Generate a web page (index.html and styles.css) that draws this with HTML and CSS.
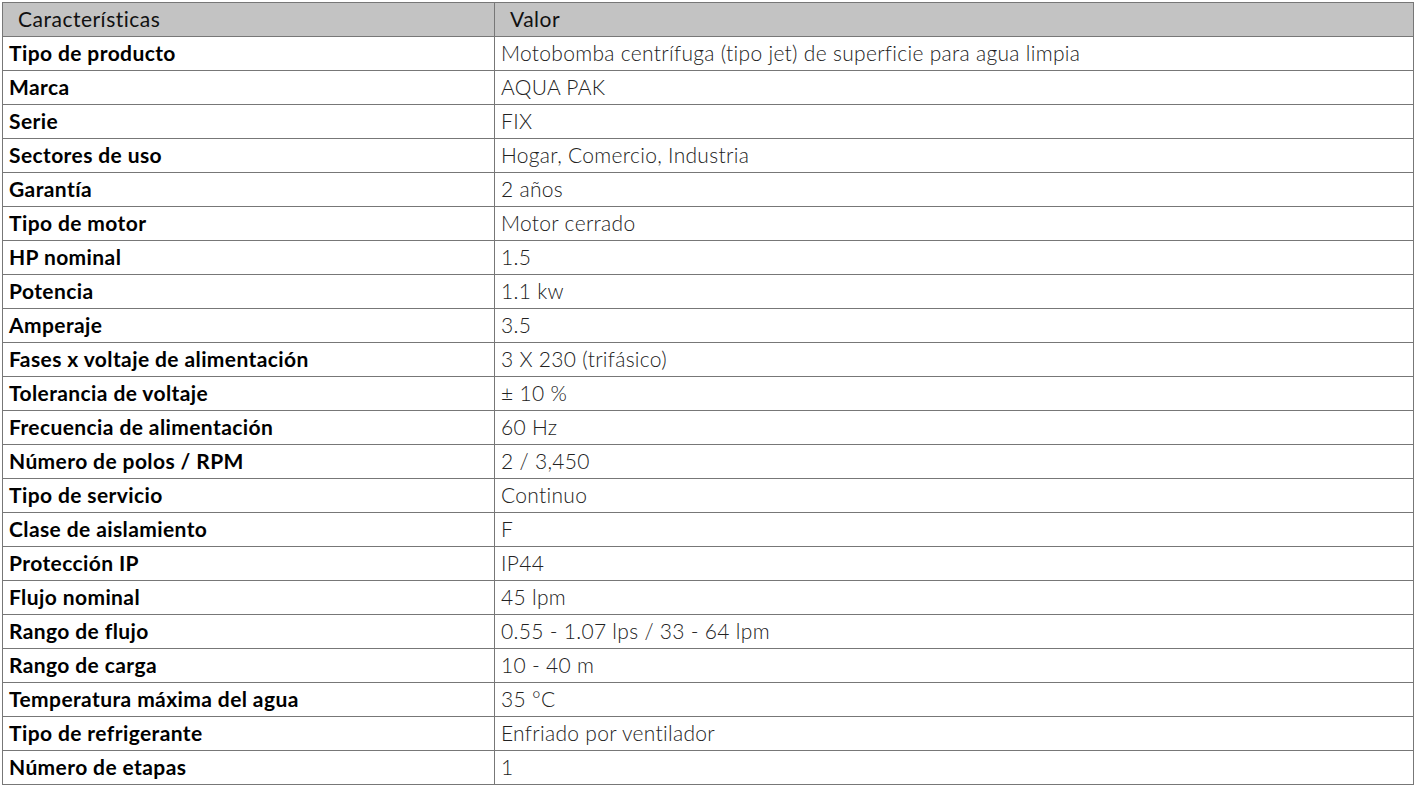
FILE: index.html
```html
<!DOCTYPE html>
<html lang="es">
<head>
<meta charset="utf-8">
<link rel="stylesheet" href="styles.css">
</head>
<body>
<table class="spec">
<thead>
<tr><th class="c1">Características</th><th class="c2">Valor</th></tr>
</thead>
<tbody>
<tr><td class="k">Tipo de producto</td><td class="v">Motobomba centrífuga (tipo jet) de superficie para agua limpia</td></tr>
<tr><td class="k">Marca</td><td class="v">AQUA PAK</td></tr>
<tr><td class="k">Serie</td><td class="v">FIX</td></tr>
<tr><td class="k">Sectores de uso</td><td class="v">Hogar, Comercio, Industria</td></tr>
<tr><td class="k">Garantía</td><td class="v">2 años</td></tr>
<tr><td class="k">Tipo de motor</td><td class="v">Motor cerrado</td></tr>
<tr><td class="k">HP nominal</td><td class="v">1.5</td></tr>
<tr><td class="k">Potencia</td><td class="v">1.1 kw</td></tr>
<tr><td class="k">Amperaje</td><td class="v">3.5</td></tr>
<tr><td class="k">Fases x voltaje de alimentación</td><td class="v">3 X 230 (trifásico)</td></tr>
<tr><td class="k">Tolerancia de voltaje</td><td class="v">± 10 %</td></tr>
<tr><td class="k">Frecuencia de alimentación</td><td class="v">60 Hz</td></tr>
<tr><td class="k">Número de polos / RPM</td><td class="v">2 / 3,450</td></tr>
<tr><td class="k">Tipo de servicio</td><td class="v">Continuo</td></tr>
<tr><td class="k">Clase de aislamiento</td><td class="v">F</td></tr>
<tr><td class="k">Protección IP</td><td class="v">IP44</td></tr>
<tr><td class="k">Flujo nominal</td><td class="v">45 lpm</td></tr>
<tr><td class="k">Rango de flujo</td><td class="v">0.55 - 1.07 lps / 33 - 64 lpm</td></tr>
<tr><td class="k">Rango de carga</td><td class="v">10 - 40 m</td></tr>
<tr><td class="k">Temperatura máxima del agua</td><td class="v">35 °C</td></tr>
<tr><td class="k">Tipo de refrigerante</td><td class="v">Enfriado por ventilador</td></tr>
<tr><td class="k">Número de etapas</td><td class="v">1</td></tr>
</tbody>
</table>
</body>
</html>
```
FILE: styles.css
```css
html, body {
  margin: 0;
  padding: 0;
  background: #fff;
}
body {
  padding: 2px 2px 0 2px;
  font-family: "Lato", "Open Sans", sans-serif;
}
.spec {
  width: 1412px;
  border-collapse: collapse;
  table-layout: fixed;
}
.spec th, .spec td {
  border: 1px solid #777;
  height: 34px;
  padding: 0 6px 2px 6px;
  box-sizing: border-box;
  vertical-align: middle;
  text-align: left;
  white-space: nowrap;
  font-size: 21px;
}
.spec th {
  background: #c3c3c3;
  font-weight: 400;
  color: #111;
  padding-left: 15px;
  letter-spacing: 0.5px;
}
.spec .c1 { width: 492px; }
.spec .k {
  font-weight: 700;
  color: #000;
  letter-spacing: 0.4px;
}
.spec .v {
  font-weight: 300;
  color: #222;
  letter-spacing: 0.3px;
}
```
